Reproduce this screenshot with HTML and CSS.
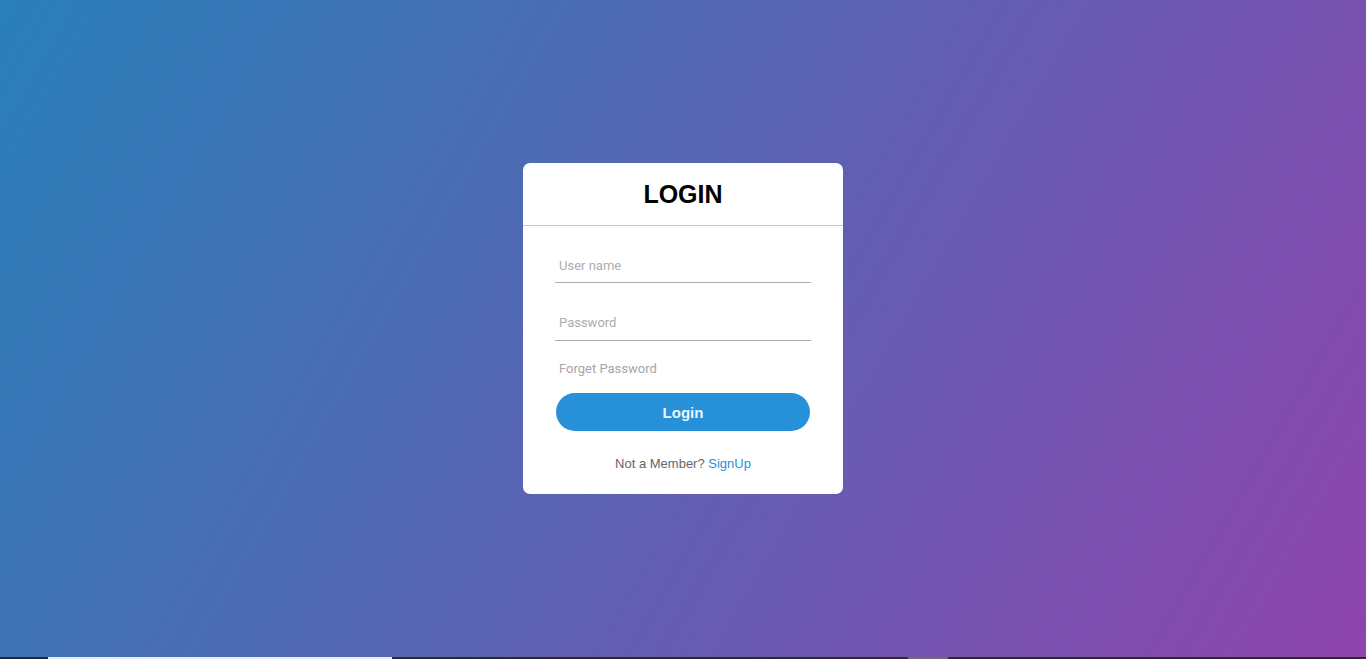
FILE: index.html
```html
<!DOCTYPE html>
<html lang="en">
<head>
<meta charset="utf-8">
<title>Login</title>
<link rel="stylesheet" href="styles.css">
</head>
<body>
<main class="stage">
  <div class="card">
    <h1 class="card-title">LOGIN</h1>
    <form class="login-form">
      <div class="field"><input type="text" placeholder="User name"></div>
      <div class="field"><input type="password" placeholder="Password"></div>
      <div class="forget">Forget Password</div>
      <button type="button" class="login-btn">Login</button>
      <div class="signup">Not a Member? <a href="#">SignUp</a></div>
    </form>
  </div>
</main>
<div class="strip">
  <span class="seg seg-navy"></span>
  <span class="seg seg-white"></span>
  <span class="seg seg-dark1"></span>
  <span class="seg seg-gray"></span>
  <span class="seg seg-dark2"></span>
</div>
</body>
</html>
```
FILE: styles.css
```css
* { box-sizing: border-box; }
html, body { margin: 0; padding: 0; height: 100%; }
body {
  display: flex;
  flex-direction: column;
  font-family: "Liberation Sans", Arial, sans-serif;
  overflow: hidden;
}
.stage {
  flex: 1;
  display: flex;
  align-items: center;
  justify-content: center;
  background: linear-gradient(120deg, #2980b9, #8e44ad);
}
.card {
  width: 320px;
  background: #fff;
  border-radius: 7px;
}
.card-title {
  margin: 0;
  height: 63px;
  line-height: 62px;
  text-align: center;
  font-size: 25px;
  font-weight: 700;
  color: #000;
  border-bottom: 1px solid #c6c6c6;
}
.login-form {
  padding: 20px 32px 22px;
  display: flex;
  flex-direction: column;
}
.field {
  border-bottom: 1px solid #adadad;
}
.field + .field { margin-top: 21px; }
.field input {
  display: block;
  width: 100%;
  height: 36px;
  border: 0;
  outline: none;
  background: transparent;
  padding: 2px 4px 0;
  font-family: Roboto, "Liberation Sans", sans-serif;
  font-size: 13px;
  color: #333;
}
.field + .field input { padding-top: 0; }
.field input::placeholder { color: #adadad; }
.forget {
  margin-top: 20px;
  padding-left: 4px;
  line-height: 16px;
  font-family: Roboto, "Liberation Sans", sans-serif;
  font-size: 13px;
  color: #a6a6a6;
}
.login-btn {
  margin: 16px 1px 0;
  height: 38px;
  border: 0;
  border-radius: 19px;
  background: #2691d9;
  color: #e9f4fb;
  font-family: "Liberation Sans", Arial, sans-serif;
  font-size: 15px;
  font-weight: 700;
  cursor: pointer;
}
.signup {
  margin-top: 25px;
  line-height: 16px;
  text-align: center;
  font-size: 13px;
  color: #666;
}
.signup a { color: #2691d9; text-decoration: none; }
.strip {
  height: 2px;
  display: flex;
  background: #2c2729;
}
.seg { display: block; height: 2px; }
.seg-navy { width: 48px; background: #1d2834; }
.seg-white { width: 344px; background: #e8edf3; }
.seg-dark1 { width: 516px; background: #2e2a2c; }
.seg-gray { width: 40px; background: #6e6c6d; }
.seg-dark2 { flex: 1; background: #2c2729; }
```
